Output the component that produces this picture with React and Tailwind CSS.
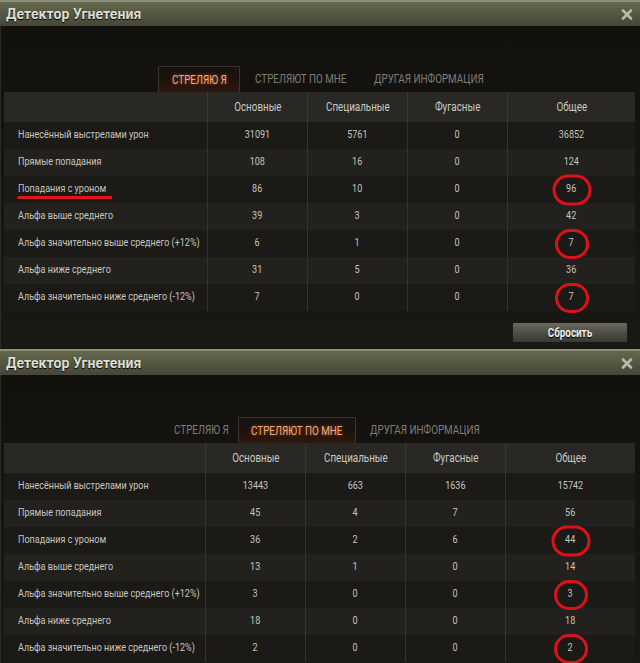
import React from "react";

const FONT = { fontFamily: "Roboto, 'Liberation Sans', sans-serif" };

const LABELS = [
  "Нанесённый выстрелами урон",
  "Прямые попадания",
  "Попадания с уроном",
  "Альфа выше среднего",
  "Альфа значительно выше среднего (+12%)",
  "Альфа ниже среднего",
  "Альфа значительно ниже среднего (-12%)",
];

const TOP = [
  ["31091", "5761", "0", "36852"],
  ["108", "16", "0", "124"],
  ["86", "10", "0", "96"],
  ["39", "3", "0", "42"],
  ["6", "1", "0", "7"],
  ["31", "5", "0", "36"],
  ["7", "0", "0", "7"],
];

const BOTTOM = [
  ["13443", "663", "1636", "15742"],
  ["45", "4", "7", "56"],
  ["36", "2", "6", "44"],
  ["13", "1", "0", "14"],
  ["3", "0", "0", "3"],
  ["18", "0", "0", "18"],
  ["2", "0", "0", "2"],
];

const CIRCLED = [2, 4, 6];

// the game font is condensed, squeeze Roboto horizontally
const NARROW = "inline-block whitespace-nowrap scale-x-[0.82]";

function CloseIcon() {
  return (
    <svg width="12" height="11" viewBox="0 0 12 11">
      <path d="M2 1.5 L10 9.5 M10 1.5 L2 9.5" stroke="#b9b9ad" strokeWidth="2.6" strokeLinecap="round" />
    </svg>
  );
}

function TitleBar() {
  return (
    <div className="border-t-2 border-[#8d8d7c]">
      <div className="h-[24px] flex items-center justify-between pl-[6px] pr-[7px] bg-gradient-to-b from-[#66674f] via-[#56573f] to-[#45463a]">
        <span className="text-[14px] font-bold text-[#dcdcd2] tracking-[0.1px] [text-shadow:0_1px_1px_#000]">Детектор Угнетения</span>
        <CloseIcon />
      </div>
    </div>
  );
}

function Tab({ label, active, w }) {
  if (active) {
    return (
      <div
        className={`h-[26px] ${w} flex items-center justify-center border border-b-0 border-[#3b3630] rounded-t-[2px] bg-gradient-to-b from-[#141210] via-[#1c130d] to-[#2e180c]`}
      >
        <span className={`${NARROW} text-[12px] text-[#f1a87a] [text-shadow:0_0_4px_#b0501e]`}>{label}</span>
      </div>
    );
  }
  return (
    <div className={`h-[26px] ${w} flex items-center justify-center`}>
      <span className={`${NARROW} text-[12px] text-[#7f7d76]`}>{label}</span>
    </div>
  );
}

function Table({ data, labelW, underline }) {
  return (
    <div className="text-[11px]">
      <div className="flex h-[30px] bg-[#2a2825] text-[#c9c8c0] text-[12px]">
        <div className={`${labelW} border-r border-[#3a3833]`} />
        <div className="w-[100px] flex items-center justify-center border-r border-[#3a3833]"><span className={NARROW}>Основные</span></div>
        <div className="w-[100px] flex items-center justify-center border-r border-[#3a3833]"><span className={NARROW}>Специальные</span></div>
        <div className="w-[100px] flex items-center justify-center border-r border-[#3a3833]"><span className={NARROW}>Фугасные</span></div>
        <div className="flex-1 flex items-center justify-center"><span className={NARROW}>Общее</span></div>
      </div>
      {data.map((row, i) => (
        <div key={i} className={`flex h-[27px] text-[#c6c5bd] ${i % 2 === 0 ? "bg-[#1c1a17]" : "bg-[#23211e]"}`}>
          <div className={`${labelW} flex items-center pl-[14px] border-r border-[#35332f]`}>
            <span className={`relative ${NARROW} origin-left`}>
              {LABELS[i]}
              {underline && i === 2 && (
                <span className="absolute left-[-1px] right-[-8px] top-[15px] h-[3px] rounded-full bg-[#e3141c]" />
              )}
            </span>
          </div>
          <div className="w-[100px] flex items-center justify-center border-r border-[#35332f]"><span className={NARROW}>{row[0]}</span></div>
          <div className="w-[100px] flex items-center justify-center border-r border-[#35332f]"><span className={NARROW}>{row[1]}</span></div>
          <div className="w-[100px] flex items-center justify-center border-r border-[#35332f]"><span className={NARROW}>{row[2]}</span></div>
          <div className="flex-1 flex items-center justify-center">
            <span className="relative">
              <span className={NARROW}>{row[3]}</span>
              {CIRCLED.includes(i) && (
                <span
                  className={`absolute left-1/2 top-1/2 -translate-x-1/2 -translate-y-1/2 rounded-full border-[3px] border-[#dc121b] ${
                    row[3].length > 1 ? "w-[39px] h-[31px]" : "w-[34px] h-[30px]"
                  }`}
                />
              )}
            </span>
          </div>
        </div>
      ))}
    </div>
  );
}

export default function App() {
  return (
    <div className="w-[640px] h-[663px] overflow-hidden bg-[#0c0b0a]" style={FONT}>
      {/* first window */}
      <div className="h-[349px] flex flex-col">
        <TitleBar />
        <div className="flex-1 bg-gradient-to-b from-[#13110e] to-[#1a1815] pl-[3px] pr-[5px] border-l border-[#2a2a26]">
          <div className="pt-[40px] flex items-end">
            <div className="w-[154px]" />
            <Tab label="СТРЕЛЯЮ Я" active w="w-[82px]" />
            <div className="w-[14px]" />
            <Tab label="СТРЕЛЯЮТ ПО МНЕ" w="w-[94px]" />
            <div className="w-[24px]" />
            <Tab label="ДРУГАЯ ИНФОРМАЦИЯ" w="w-[114px]" />
          </div>
          <Table data={TOP} labelW="w-[204px]" underline />
          <div className="flex justify-end pt-[11px] pr-[7px]">
            <button className="w-[116px] h-[21px] rounded-[2px] border border-[#1a1a18] bg-gradient-to-b from-[#6b6b62] via-[#4f4f48] to-[#3a3a35] text-[12px] font-bold text-[#eeeeea] [text-shadow:0_1px_1px_#000]">
              <span className={NARROW}>Сбросить</span>
            </button>
          </div>
        </div>
      </div>
      {/* second window */}
      <div className="flex flex-col">
        <TitleBar />
        <div className="bg-gradient-to-b from-[#13110e] to-[#1a1815] pl-[3px] pr-[5px] border-l border-[#2a2a26] h-[300px]">
          <div className="pt-[42px] flex items-end">
            <div className="w-[164px]" />
            <Tab label="СТРЕЛЯЮ Я" w="w-[66px]" />
            <div className="w-[4px]" />
            <Tab label="СТРЕЛЯЮТ ПО МНЕ" active w="w-[118px]" />
            <div className="w-[12px]" />
            <Tab label="ДРУГАЯ ИНФОРМАЦИЯ" w="w-[114px]" />
          </div>
          <Table data={BOTTOM} labelW="w-[202px]" />
        </div>
      </div>
    </div>
  );
}
